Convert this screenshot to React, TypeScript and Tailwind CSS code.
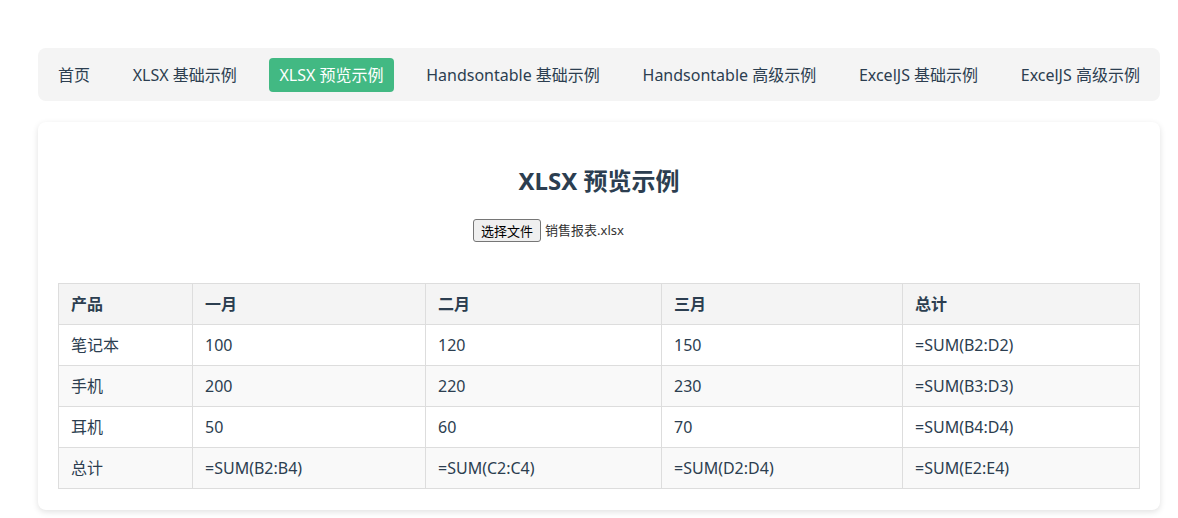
import React from "react";

const navItems = [
  "首页",
  "XLSX 基础示例",
  "XLSX 预览示例",
  "Handsontable 基础示例",
  "Handsontable 高级示例",
  "ExcelJS 基础示例",
  "ExcelJS 高级示例",
];

const headers = ["产品", "一月", "二月", "三月", "总计"];
const rows = [
  ["笔记本", "100", "120", "150", "=SUM(B2:D2)"],
  ["手机", "200", "220", "230", "=SUM(B3:D3)"],
  ["耳机", "50", "60", "70", "=SUM(B4:D4)"],
  ["总计", "=SUM(B2:B4)", "=SUM(C2:C4)", "=SUM(D2:D4)", "=SUM(E2:E4)"],
];

const colW = ["w-[134px]", "w-[233px]", "w-[236px]", "w-[241px]", "w-[237px]"];

export default function App() {
  return (
    <div
      className="min-h-[518px] bg-white pl-[38px] pr-[18px] pt-[48px] text-[#2c3e50]"
      style={{ fontFamily: '"Noto Sans", "Noto Sans CJK SC", sans-serif' }}
    >
      <nav className="flex items-center justify-between rounded-lg bg-[#f4f4f4] p-[10px] h-[53px]">
        {navItems.map((item, i) => (
          <a
            key={item}
            className={
              "rounded px-[10px] h-[34px] flex items-center text-[16px] whitespace-nowrap " +
              (i === 2 ? "bg-[#42b983] text-white" : "text-[#2c3e50]")
            }
          >
            {item}
          </a>
        ))}
      </nav>

      <div className="mt-[21px] rounded-lg bg-white p-5 pb-[21px] shadow-[0_2px_6px_rgba(0,0,0,0.12)]">
        <h2 className="mt-[21px] mb-[20px] text-center text-[24px] font-bold leading-[36px] text-[#2c3e50]">
          XLSX 预览示例
        </h2>
        <div className="mx-auto flex w-[252px] items-center">
          <button
            className="h-[23px] rounded-[3px] border border-[#767676] bg-[#efefef] px-[7px] text-[13px] leading-none text-black"
            style={{ fontFamily: '"Noto Sans CJK SC", sans-serif' }}
          >
            选择文件
          </button>
          <span className="ml-[4px] text-[13px] text-[#333]">销售报表.xlsx</span>
        </div>
        <table className="mt-[41px] w-full table-fixed border-collapse text-[16px] text-[#333]">
          <thead>
            <tr className="bg-[#f4f4f4]">
              {headers.map((h, i) => (
                <th
                  key={h}
                  className={
                    colW[i] +
                    " border border-[#ddd] px-3 py-2 text-left font-bold leading-6 text-[#2c3e50]"
                  }
                >
                  {h}
                </th>
              ))}
            </tr>
          </thead>
          <tbody>
            {rows.map((r, ri) => (
              <tr key={ri} className={ri % 2 === 1 ? "bg-[#f9f9f9]" : "bg-white"}>
                {r.map((c, ci) => (
                  <td key={ci} className="border border-[#ddd] px-3 py-2 leading-6 text-[#2c3e50]">
                    {c}
                  </td>
                ))}
              </tr>
            ))}
          </tbody>
        </table>
      </div>
    </div>
  );
}
